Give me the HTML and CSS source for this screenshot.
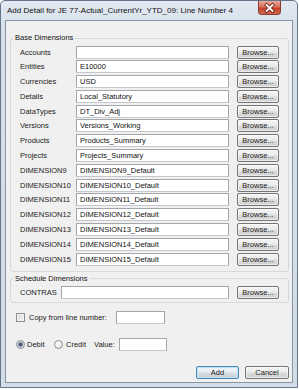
FILE: index.html
```html
<!DOCTYPE html>
<html lang="en">
<head>
<meta charset="utf-8">
<title>Add Detail</title>
<link rel="stylesheet" href="styles.css">
</head>
<body>
<div class="window">
  <div class="titlebar">
    <span class="title">Add Detail for JE 77-Actual_CurrentYr_YTD_09: Line Number 4</span>
    <span class="close" aria-label="Close">
      <svg width="23" height="14" viewBox="0 0 23 14">
        <path d="M8.5 4 L14.5 10 M14.5 4 L8.5 10" stroke="#6a2216" stroke-width="3.4" stroke-linecap="square" fill="none"/>
        <path d="M8.5 4 L14.5 10 M14.5 4 L8.5 10" stroke="#ffffff" stroke-width="1.8" stroke-linecap="square" fill="none"/>
      </svg>
    </span>
  </div>
  <div class="client">
    <fieldset class="group base">
      <legend>Base Dimensions</legend>
      <div class="rows">
        <div class="row"><label class="lbl">Accounts</label><input class="field" type="text" value=""><button class="btn browse">Browse...</button></div>
        <div class="row"><label class="lbl">Entities</label><input class="field" type="text" value="E10000"><button class="btn browse">Browse...</button></div>
        <div class="row"><label class="lbl">Currencies</label><input class="field" type="text" value="USD"><button class="btn browse">Browse...</button></div>
        <div class="row"><label class="lbl">Details</label><input class="field" type="text" value="Local_Statutory"><button class="btn browse">Browse...</button></div>
        <div class="row"><label class="lbl">DataTypes</label><input class="field" type="text" value="DT_Div_Adj"><button class="btn browse">Browse...</button></div>
        <div class="row"><label class="lbl">Versions</label><input class="field" type="text" value="Versions_Working"><button class="btn browse">Browse...</button></div>
        <div class="row"><label class="lbl">Products</label><input class="field" type="text" value="Products_Summary"><button class="btn browse">Browse...</button></div>
        <div class="row"><label class="lbl">Projects</label><input class="field" type="text" value="Projects_Summary"><button class="btn browse">Browse...</button></div>
        <div class="row"><label class="lbl">DIMENSION9</label><input class="field" type="text" value="DIMENSION9_Default"><button class="btn browse">Browse...</button></div>
        <div class="row"><label class="lbl">DIMENSION10</label><input class="field" type="text" value="DIMENSION10_Default"><button class="btn browse">Browse...</button></div>
        <div class="row"><label class="lbl">DIMENSION11</label><input class="field" type="text" value="DIMENSION11_Default"><button class="btn browse">Browse...</button></div>
        <div class="row"><label class="lbl">DIMENSION12</label><input class="field" type="text" value="DIMENSION12_Default"><button class="btn browse">Browse...</button></div>
        <div class="row"><label class="lbl">DIMENSION13</label><input class="field" type="text" value="DIMENSION13_Default"><button class="btn browse">Browse...</button></div>
        <div class="row"><label class="lbl">DIMENSION14</label><input class="field" type="text" value="DIMENSION14_Default"><button class="btn browse">Browse...</button></div>
        <div class="row"><label class="lbl">DIMENSION15</label><input class="field" type="text" value="DIMENSION15_Default"><button class="btn browse">Browse...</button></div>
      </div>
    </fieldset>
    <fieldset class="group sched">
      <legend>Schedule Dimensions</legend>
      <div class="rows">
        <div class="row contras"><label class="lbl">CONTRAS</label><input class="field" type="text" value=""><button class="btn browse">Browse...</button></div>
      </div>
    </fieldset>
    <div class="copy-row">
      <input class="check" type="checkbox">
      <label class="copy-lbl">Copy from line number:</label>
      <input class="field small" type="text" value="">
    </div>
    <div class="radio-row">
      <input class="radio" type="radio" name="dc" checked>
      <label class="r-lbl debit">Debit</label>
      <input class="radio" type="radio" name="dc">
      <label class="r-lbl credit">Credit</label>
      <label class="r-lbl value">Value:</label>
      <input class="field small value-field" type="text" value="">
    </div>
    <div class="actions">
      <button class="btn action default">Add</button>
      <button class="btn action cancel">Cancel</button>
    </div>
  </div>
</div>
</body>
</html>
```
FILE: styles.css
```css
* { box-sizing: border-box; }
html, body { margin: 0; padding: 0; background: #ffffff; }
body {
  width: 299px;
  height: 390px;
  overflow: hidden;
  font-family: "Liberation Sans", Arial, sans-serif;
  font-size: 7.5px;
  color: #000;
}
.window {
  width: 298px;
  height: 388px;
  border: 1px solid #64758a;
  border-radius: 5px 5px 0 0;
  background: linear-gradient(#e2e9f2, #d6dfea 30px, #d3dde8);
  padding: 0 4px 4px 4px;
  display: flex;
  flex-direction: column;
}
.titlebar {
  height: 19px;
  display: flex;
  align-items: flex-start;
}
.title {
  padding-left: 2px;
  line-height: 19px;
  font-size: 8px;
  color: #111;
  white-space: nowrap;
}
.close {
  margin-left: auto;
  margin-right: 12px;
  width: 23px;
  height: 14px;
  border: 1px solid #8a3a2e;
  border-top: none;
  border-radius: 0 0 4px 4px;
  background: linear-gradient(#e7a99b, #d7705c 45%, #c4412b 55%, #d66a50);
  display: flex;
  align-items: center;
  justify-content: center;
}
.close svg { display: block; margin: -1px; }
.client {
  flex: 1;
  border: 1px solid #8795a6;
  background: #f0f0f0;
  display: flex;
  flex-direction: column;
}
.group {
  border: 1px solid #d3d9de;
  border-radius: 3px;
  min-width: 0;
}
.group legend {
  padding: 0 2px;
  line-height: 10px;
  font-size: 7.5px;
  color: #111;
}
.base {
  margin: 12px 3px 0 4px;
  padding: 2.5px 9px 5px 2px;
}
.sched {
  margin: 2px 3px 0 4px;
  padding: 2px 9px 3px 2px;
}
.rows {
  margin-left: 7px;
  display: flex;
  flex-direction: column;
  gap: 1.8px;
}
.row {
  display: flex;
  align-items: center;
  height: 13px;
}
.lbl {
  width: 56px;
  white-space: nowrap;
  color: #222;
}
.field {
  width: 153px;
  height: 13px;
  margin: 0;
  padding: 0 3px;
  border: 1px solid #a3a6ad;
  border-bottom-color: #c3c8cf;
  background: #fff;
  font: inherit;
  color: #111;
  outline: none;
}
.contras .lbl { width: 41px; }
.contras .field { width: 168px; }
.btn {
  font: inherit;
  color: #222;
  height: 13px;
  padding: 0;
  margin: 0;
  border: 1px solid #747474;
  border-radius: 2px;
  background: linear-gradient(#f4f4f4 0%, #ebebeb 48%, #dcdcdc 52%, #cfcfcf 100%);
  box-shadow: inset 0 0 0 1px rgba(255,255,255,0.6);
  line-height: 11px;
}
.browse {
  margin-left: 8px;
  width: 42px;
}
.copy-row {
  margin: 8.3px 0 0 10px;
  display: flex;
  align-items: center;
  height: 13px;
}
.check {
  -webkit-appearance: none;
  appearance: none;
  margin: 0;
  width: 9px;
  height: 9px;
  border: 1px solid #8c8e90;
  background: linear-gradient(135deg, #d6d8db, #f7f7f7);
  box-shadow: inset 0 0 0 1px #f2f2f2;
}
.copy-lbl {
  margin-left: 4px;
  width: 87px;
  white-space: nowrap;
  color: #222;
}
.small { width: 49px; }
.radio-row {
  margin: 14px 0 0 10px;
  display: flex;
  align-items: center;
  height: 13px;
}
.radio {
  -webkit-appearance: none;
  appearance: none;
  margin: 0;
  width: 9px;
  height: 9px;
  border: 1px solid #8c8e90;
  border-radius: 50%;
  background: radial-gradient(circle at 40% 40%, #ffffff, #dcdcdc);
}
.radio:checked {
  background: radial-gradient(circle, #3f4f60 0, #5d7088 1.8px, #c9d0d8 2.6px, #f3f3f3 4px);
}
.r-lbl { white-space: nowrap; color: #222; }
.debit { margin-left: 2px; width: 27px; }
.credit { margin-left: 3px; width: 28px; }
.value { width: 25px; }
.value-field { width: 48px; }
.actions {
  margin-top: 15px;
  padding-right: 3px;
  display: flex;
  justify-content: flex-end;
  gap: 6px;
}
.action { height: 13px; }
.default {
  width: 43px;
  border-color: #4a88b8;
  box-shadow: inset 0 0 0 1px #bfe0f5;
  background: linear-gradient(#f1f5f8 0%, #e6ebef 48%, #d6dde3 52%, #c9d2d9 100%);
}
.cancel { width: 44px; }
```
